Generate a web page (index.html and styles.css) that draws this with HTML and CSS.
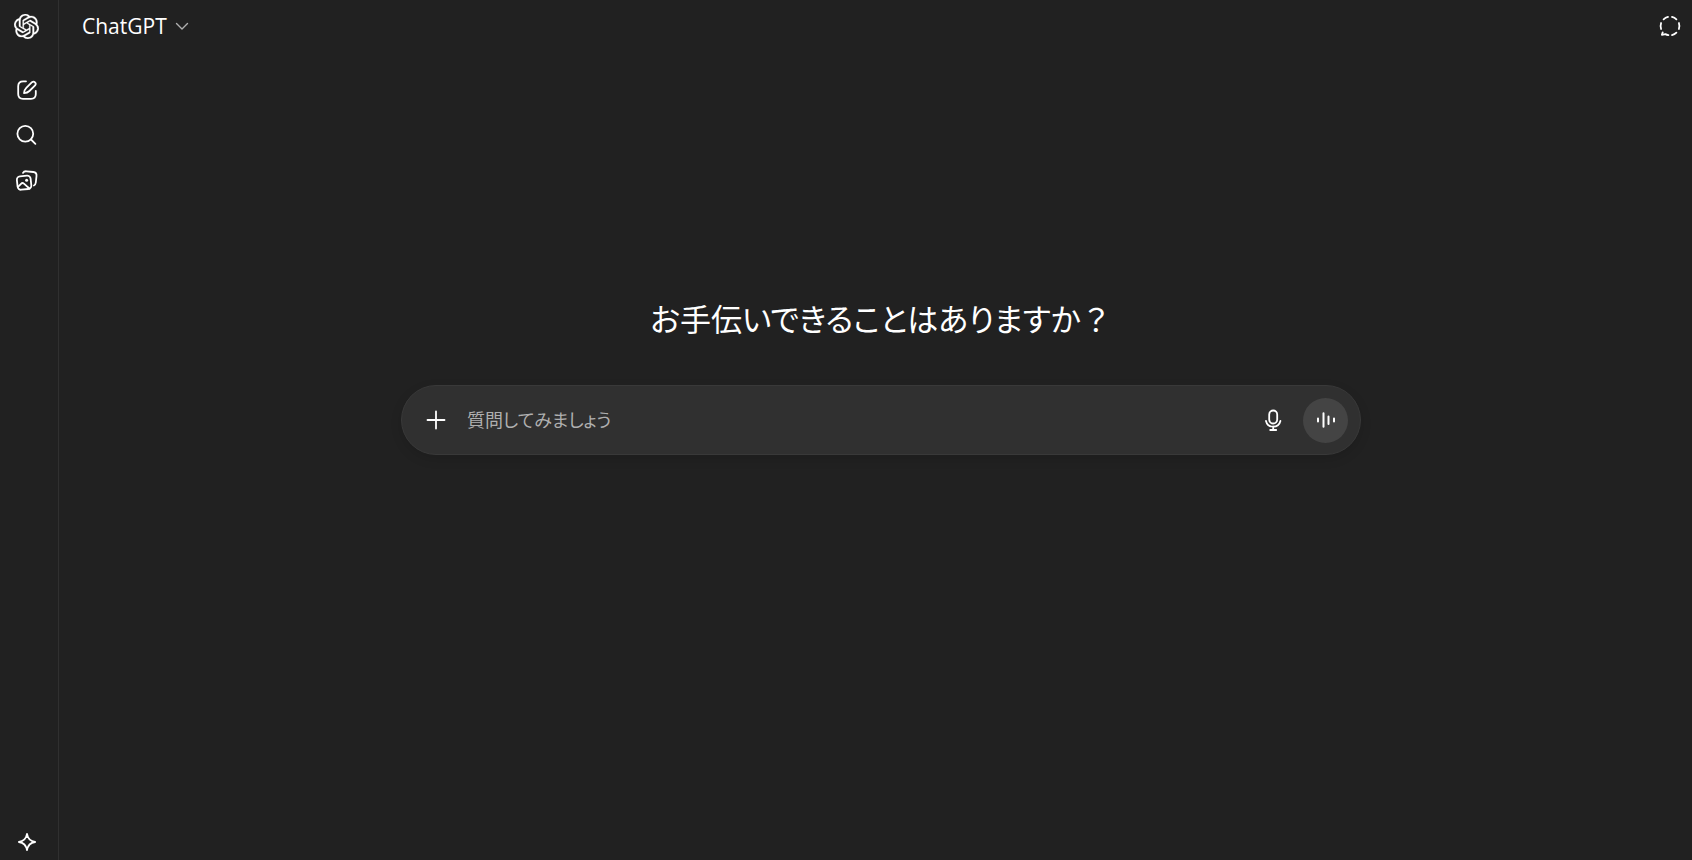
FILE: index.html
```html
<!DOCTYPE html>
<html lang="ja">
<head>
<meta charset="utf-8">
<meta name="viewport" content="width=device-width, initial-scale=1">
<title>ChatGPT</title>
<link rel="stylesheet" href="styles.css">
</head>
<body>
<div class="app">
  <nav class="rail" aria-label="サイドバー">
    <a class="rail-item logo" href="#" aria-label="ホーム">
      <svg viewBox="0 0 24 24" width="25" height="25" fill="currentColor" stroke="currentColor" stroke-width=".25"><path d="M22.2819 9.8211a5.9847 5.9847 0 0 0-.5157-4.9108 6.0462 6.0462 0 0 0-6.5098-2.9A6.0651 6.0651 0 0 0 4.9807 4.1818a5.9847 5.9847 0 0 0-3.9977 2.9 6.0462 6.0462 0 0 0 .7427 7.0966 5.98 5.98 0 0 0 .511 4.9107 6.051 6.051 0 0 0 6.5146 2.9001A5.9847 5.9847 0 0 0 13.2599 24a6.0557 6.0557 0 0 0 5.7718-4.2058 5.9894 5.9894 0 0 0 3.9977-2.9001 6.0557 6.0557 0 0 0-.7475-7.0729zm-9.022 12.6081a4.4755 4.4755 0 0 1-2.8764-1.0408l.1419-.0804 4.7783-2.7582a.7948.7948 0 0 0 .3927-.6813v-6.7369l2.02 1.1686a.071.071 0 0 1 .038.052v5.5826a4.504 4.504 0 0 1-4.4945 4.4944zm-9.6607-4.1254a4.4708 4.4708 0 0 1-.5346-3.0137l.142.0852 4.783 2.7582a.7712.7712 0 0 0 .7806 0l5.8428-3.3685v2.3324a.0804.0804 0 0 1-.0332.0615L9.74 19.9502a4.4992 4.4992 0 0 1-6.1408-1.6464zM2.3408 7.8956a4.485 4.485 0 0 1 2.3655-1.9728V11.6a.7664.7664 0 0 0 .3879.6765l5.8144 3.3543-2.0201 1.1685a.0757.0757 0 0 1-.071 0l-4.8303-2.7865A4.504 4.504 0 0 1 2.3408 7.872zm16.5963 3.8558L13.1038 8.364 15.1192 7.2a.0757.0757 0 0 1 .071 0l4.8303 2.7913a4.4944 4.4944 0 0 1-.6765 8.1042v-5.6772a.79.79 0 0 0-.407-.667zm2.0107-3.0231l-.142-.0852-4.7735-2.7818a.7759.7759 0 0 0-.7854 0L9.409 9.2297V6.8974a.0662.0662 0 0 1 .0284-.0615l4.8303-2.7866a4.4992 4.4992 0 0 1 6.6802 4.66zM8.3065 12.863l-2.02-1.1638a.0804.0804 0 0 1-.038-.0567V6.0742a4.4992 4.4992 0 0 1 7.3757-3.4537l-.142.0805L8.704 5.459a.7948.7948 0 0 0-.3927.6813zm1.0976-2.3654l2.602-1.4998 2.6069 1.4998v2.9994l-2.5974 1.4997-2.6067-1.4997Z"/></svg>
    </a>
    <button class="rail-item" type="button" aria-label="新しいチャット">
      <svg class="line" viewBox="0 0 24 24" width="24" height="24"><path d="M11 3.300H8.200C4.900 3.300 3.200 5 3.200 8.300V16c0 3.300 1.500 4.800 4.800 4.800h8c3.300 0 4.800-1.500 4.800-4.800v-3"/><path d="M9 15.200c.2-2.500.9-3.900 2.300-5.300l5.700-5.700a2.200 2.200 0 0 1 3.100 3.100l-5.700 5.700C13 14.400 11.500 15 9 15.200z"/></svg>
    </button>
    <button class="rail-item" type="button" aria-label="チャットを検索">
      <svg class="line" viewBox="0 0 24 24" width="24" height="24"><circle cx="10.300" cy="10.800" r="7.900"/><path d="M16 16.500l4.400 4.300"/></svg>
    </button>
    <button class="rail-item" type="button" aria-label="ライブラリ">
      <svg class="line" viewBox="0 0 24 24" width="24" height="24"><rect x="2.200" y="8" width="13.800" height="13.400" rx="3.400" transform="rotate(-6 9.100 14.700)"/><path d="M3 18.800l3-3c.9-.9 2-.9 2.900-.1l5.800 5"/><circle cx="11.600" cy="12.200" r="1.500" fill="currentColor" stroke="none"/><path d="M8 4.900c.7-1.400 1.900-1.800 3.700-1.600l6.600.7c2.500.3 3.500 1.500 3.200 4l-.7 6.500c-.2 1.600-.7 2.500-1.900 3"/></svg>
    </button>
    <button class="rail-item rail-end" type="button" aria-label="アップグレード">
      <svg class="line" viewBox="0 0 24 24" width="24" height="24"><path d="M12 3.900c.8 5 3.100 7.300 8.100 8.100-5 .8-7.300 3.100-8.100 8.100-.8-5-3.100-7.300-8.100-8.100 5-.8 7.300-3.100 8.100-8.100z"/></svg>
    </button>
  </nav>
  <div class="page">
    <header class="topbar">
      <button class="model" type="button">ChatGPT
        <svg class="line chevron" viewBox="0 0 16 16" width="16" height="16"><path d="M2.500 5.500L8 11l5.500-5.500"/></svg>
      </button>
      <button class="temp" type="button" aria-label="一時チャット">
        <svg class="line" viewBox="0 0 24 24" width="24" height="24"><path d="M14 2.900a9.400 9.400 0 0 1 4.400 2.500M20.900 9a9.400 9.400 0 0 1 0 6M18.400 18.700a9.400 9.400 0 0 1-4.400 2.400M10.400 21.200a9.400 9.400 0 0 1-3-1.100l-3.500.7.800-2.400M3.100 15a9.400 9.400 0 0 1 0-6M5.600 5.400A9.400 9.400 0 0 1 10 2.900"/></svg>
      </button>
    </header>
    <main class="content">
      <h1 class="greeting">お手伝いできることはありますか<span class="full-width">？</span></h1>
      <form class="composer">
        <button class="tool" type="button" aria-label="追加">
          <svg class="line" viewBox="0 0 24 24" width="24" height="24"><path d="M11 3.500v17M2.500 12h17"/></svg>
        </button>
        <input class="prompt" type="text" placeholder="質問してみましょう" aria-label="質問してみましょう">
        <button class="tool" type="button" aria-label="音声入力">
          <svg class="line" viewBox="0 0 24 24" width="24" height="24"><rect x="8.200" y="2.500" width="8" height="13" rx="4"/><path d="M5 13a7.400 7.400 0 0 0 14.400 0M12.200 18.500V22M9.200 22h6"/></svg>
        </button>
        <button class="voice" type="button" aria-label="音声モード">
          <svg class="line bars" viewBox="0 0 24 24" width="24" height="24"><path d="M4 10.500v3M9.500 5.200v13.600M14.500 8.500v7.500M20 10.500v3"/></svg>
        </button>
      </form>
    </main>
  </div>
</div>
</body>
</html>
```
FILE: styles.css
```css
* {
  box-sizing: border-box;
}

body {
  margin: 0;
  background: #212121;
  color: #fff;
  font-family: "Open Sans", "Noto Sans CJK JP", sans-serif;
}

button,
input {
  margin: 0;
  padding: 0;
  border: 0;
  background: none;
  color: inherit;
  font: inherit;
}

svg {
  display: block;
  flex: none;
}

.line {
  fill: none;
  stroke: currentColor;
  stroke-width: 1.8;
  stroke-linecap: round;
  stroke-linejoin: round;
}

.app {
  display: flex;
  min-height: 100vh;
}

.rail {
  display: flex;
  flex-direction: column;
  align-items: center;
  width: 59px;
  padding: 4px 5px 0 0;
  border-right: 1px solid #303030;
}

.rail-item {
  display: grid;
  place-items: center;
  width: 45px;
  height: 45px;
  color: #fff;
}

.logo {
  margin-bottom: 18px;
}

.rail-end {
  margin-top: auto;
  margin-bottom: -4px;
}

.page {
  display: flex;
  flex: 1;
  flex-direction: column;
}

.topbar {
  display: flex;
  align-items: center;
  justify-content: space-between;
  height: 51px;
  padding: 0 10px 0 23px;
}

.model {
  display: flex;
  align-items: center;
  gap: 7px;
  font-size: 21px;
  line-height: 32px;
}

.chevron {
  color: #afafaf;
  stroke-width: 1.4;
}

.content {
  display: flex;
  flex-direction: column;
  align-items: center;
  gap: 42px;
  padding: 244px 0 0 11px;
}

.greeting {
  margin: 0;
  font-size: 31px;
  font-weight: 400;
  line-height: 48px;
  font-feature-settings: "palt";
}

.full-width {
  font-feature-settings: normal;
}

.composer {
  display: flex;
  align-items: center;
  width: 100%;
  max-width: 960px;
  height: 70px;
  padding: 0 12px;
  border: 1px solid #393939;
  border-radius: 35px;
  background: #303030;
  box-shadow: 0 4px 12px rgba(0, 0, 0, 0.12);
}

.tool,
.voice {
  display: grid;
  flex: none;
  place-items: center;
  width: 45px;
  height: 45px;
  border-radius: 50%;
}

.prompt {
  flex: 1;
  min-width: 0;
  padding: 0 8px;
  outline: 0;
  font-size: 18px;
  line-height: 30px;
  font-feature-settings: "palt";
}

.prompt::placeholder {
  color: #afafaf;
  opacity: 1;
}

.voice {
  margin-left: 8px;
  background: #444;
}

.bars {
  stroke-width: 2;
}
```
